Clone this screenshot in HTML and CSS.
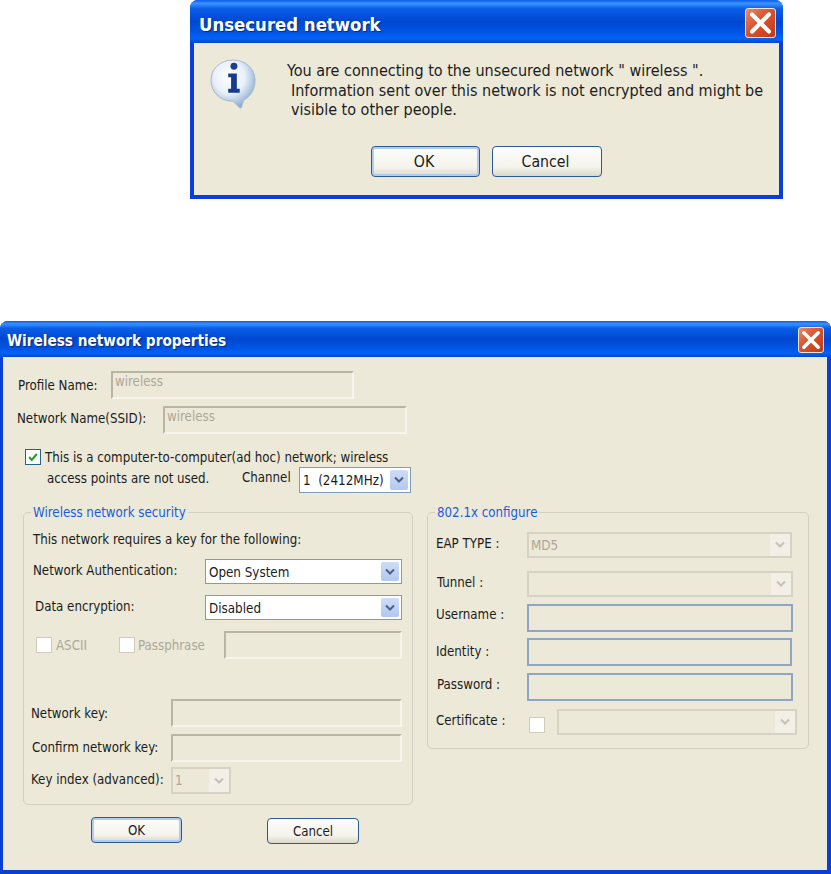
FILE: index.html
```html
<!DOCTYPE html>
<html lang="en">
<head>
  <title>Wireless network dialogs</title>
  <meta charset="UTF-8">
  <link rel="stylesheet" href="styles.css">
</head>
<body>
  <section class="window alert">
    <header class="titlebar">
      <h1>Unsecured network</h1>
      <button class="close" aria-label="Close">
        <svg viewBox="0 0 20 20"><path d="M4 4 L16 16 M16 4 L4 16" stroke="#fff" stroke-width="3" stroke-linecap="round"/></svg>
      </button>
    </header>
    <div class="client">
      <div class="message">
        <svg class="info" viewBox="0 0 48 52">
          <defs>
            <radialGradient id="bubble" cx="0.42" cy="0.35" r="0.7">
              <stop offset="0" stop-color="#ffffff"/>
              <stop offset="0.5" stop-color="#e9f0f9"/>
              <stop offset="1" stop-color="#7fa3cf"/>
            </radialGradient>
          </defs>
          <path d="M24 1 C37 1 47 10 47 22 C47 33 41 40 35 43 L33 50 C32.5 51.5 31 51.5 30 50 L24 44 C10 44 1 34 1 22 C1 10 11 1 24 1 Z" fill="url(#bubble)" stroke="#a9b8c8" stroke-width="1"/>
          <circle cx="25" cy="7.5" r="3.6" fill="#1a3f8f"/>
          <path d="M19 15 H28 V31 H31 V35 H19 V31 H22 V19 H19 Z" fill="#163a8c"/>
        </svg>
        <p class="message-text">
          You are connecting to the unsecured network " wireless ".
          <span class="indented">Information sent over this network is not encrypted and might be</span>
          <span class="indented">visible to other people.</span>
        </p>
      </div>
      <div class="alert-buttons">
        <button class="xp-btn default ok">OK</button>
        <button class="xp-btn cancel">Cancel</button>
      </div>
    </div>
  </section>

  <section class="window props">
    <header class="titlebar">
      <h1>Wireless network properties</h1>
      <button class="close" aria-label="Close">
        <svg viewBox="0 0 20 20"><path d="M4 4 L16 16 M16 4 L4 16" stroke="#fff" stroke-width="3" stroke-linecap="round"/></svg>
      </button>
    </header>
    <div class="client">
      <div class="row profile-row">
        <label class="lbl-profile">Profile Name:</label>
        <input class="sunken w243" disabled value="wireless">
      </div>
      <div class="row ssid-row">
        <label class="lbl-ssid lift2">Network Name(SSID):</label>
        <input class="sunken w244" disabled value="wireless">
      </div>
      <div class="adhoc-first">
        <span class="check checked">
          <svg viewBox="0 0 14 14"><path d="M2.5 7 L5.5 10.5 L11.5 3.5" fill="none" stroke="#21a121" stroke-width="2.4"/></svg>
        </span>
        <span class="adhoc-text">This is a computer-to-computer(ad hoc) network; wireless</span>
      </div>
      <div class="row adhoc-second">
        <span class="adhoc-cont">access points are not used.</span>
        <span class="channel-lbl">Channel</span>
        <div class="combo w112">
          <span class="combo-value channel-value">1  (2412MHz)</span>
          <span class="combo-btn"><svg viewBox="0 0 12 8"><path d="M2 1.5 L6 5.5 L10 1.5" fill="none" stroke="#4d6185" stroke-width="2"/></svg></span>
        </div>
      </div>

      <div class="groups">
        <div class="left-col">
          <fieldset class="group left-group">
            <legend>Wireless network security</legend>
            <p class="key-note">This network requires a key for the following:</p>
            <div class="row auth-row">
              <label class="lbl-auth lift1">Network Authentication:</label>
              <div class="combo w197">
                <span class="combo-value">Open System</span>
                <span class="combo-btn"><svg viewBox="0 0 12 8"><path d="M2 1.5 L6 5.5 L10 1.5" fill="none" stroke="#4d6185" stroke-width="2"/></svg></span>
              </div>
            </div>
            <div class="row data-row">
              <label class="lbl-data lift1">Data encryption:</label>
              <div class="combo w197">
                <span class="combo-value">Disabled</span>
                <span class="combo-btn"><svg viewBox="0 0 12 8"><path d="M2 1.5 L6 5.5 L10 1.5" fill="none" stroke="#4d6185" stroke-width="2"/></svg></span>
              </div>
            </div>
            <div class="row ascii-row">
              <span class="opt opt-ascii"><span class="check off"></span><span class="muted">ASCII</span></span>
              <span class="opt opt-pass"><span class="check off"></span><span class="muted">Passphrase</span></span>
              <input class="sunken w178" disabled>
            </div>
            <div class="row netkey-row">
              <label class="lbl-key">Network key:</label>
              <input class="sunken w231" disabled>
            </div>
            <div class="row confirm-row">
              <label class="lbl-confirm lift1">Confirm network key:</label>
              <input class="sunken w231" disabled>
            </div>
            <div class="row index-row">
              <label class="lbl-key lift1">Key index (advanced):</label>
              <div class="combo disabled w60">
                <span class="combo-value">1</span>
                <span class="combo-btn"><svg viewBox="0 0 12 8"><path d="M2 1.5 L6 5.5 L10 1.5" fill="none" stroke="#c4c2b6" stroke-width="2"/></svg></span>
              </div>
            </div>
          </fieldset>
          <div class="props-buttons">
            <button class="xp-btn default props-ok">OK</button>
            <button class="xp-btn props-cancel">Cancel</button>
          </div>
        </div>

        <fieldset class="group right-group">
          <legend>802.1x configure</legend>
          <div class="row eap-row">
            <label class="lbl-eap lift2">EAP TYPE :</label>
            <div class="combo disabled w265">
              <span class="combo-value">MD5</span>
              <span class="combo-btn"><svg viewBox="0 0 12 8"><path d="M2 1.5 L6 5.5 L10 1.5" fill="none" stroke="#c4c2b6" stroke-width="2"/></svg></span>
            </div>
          </div>
          <div class="row tunnel-row">
            <label class="lbl-tunnel lift2">Tunnel :</label>
            <div class="combo disabled w266">
              <span class="combo-value"></span>
              <span class="combo-btn"><svg viewBox="0 0 12 8"><path d="M2 1.5 L6 5.5 L10 1.5" fill="none" stroke="#c4c2b6" stroke-width="2"/></svg></span>
            </div>
          </div>
          <div class="row user-row">
            <label class="lbl-eap lift4">Username :</label>
            <input class="blue-input w266">
          </div>
          <div class="row identity-row">
            <label class="lbl-eap lift1">Identity :</label>
            <input class="blue-input w265">
          </div>
          <div class="row password-row">
            <label class="lbl-tunnel lift3">Password :</label>
            <input class="blue-input w266">
          </div>
          <div class="row cert-row">
            <label class="lbl-eap lift2">Certificate :</label>
            <span class="check off cert-check"></span>
            <div class="combo disabled w240">
              <span class="combo-value"></span>
              <span class="combo-btn"><svg viewBox="0 0 12 8"><path d="M2 1.5 L6 5.5 L10 1.5" fill="none" stroke="#c4c2b6" stroke-width="2"/></svg></span>
            </div>
          </div>
        </fieldset>
      </div>
    </div>
  </section>
</body>
</html>
```

FILE: styles.css
```css
:root {
  --face: #ece9d8;
  --frame: #0a3fd6;
  --ink: #1c1c1c;
  --muted: #aca899;
  --edge: #d2d0c0;
  --field: #7f9db9;
}

* {
  box-sizing: border-box;
}

html, body {
  margin: 0;
  height: 874px;
  overflow: hidden;
}

body {
  background: #fff;
  color: var(--ink);
  font-family: "DejaVu Sans Condensed", "DejaVu Sans", sans-serif;
  font-size: 13.2px;
}

label, p {
  margin: 0;
}

/* window frames */
.window {
  display: flex;
  flex-direction: column;
  background: var(--frame);
  border-radius: 8px 8px 0 0;
  overflow: hidden;
}

.alert {
  width: 593px;
  height: 199px;
  margin-left: 190px;
  padding: 0 4px 4px;
}

.props {
  width: 831px;
  height: 553px;
  margin-top: 122px;
  padding: 0 4px 4px 3px;
}

.titlebar {
  flex: none;
  display: flex;
  align-items: center;
  justify-content: space-between;
  margin: 0 -4px;
  color: #fff;
  background: linear-gradient(#0a5ce8 0, #3a93ff 8%, #0a5ee8 20%, #0047d0 50%, #0055e5 75%, #0063f8 90%, #0046c8 100%);
}

.alert .titlebar {
  height: 43px;
  padding: 0 7px 0 9px;
}

.props .titlebar {
  height: 36px;
  padding: 0 7px 0 8px;
}

.titlebar h1 {
  font-weight: bold;
  text-shadow: 1px 1px 1px #0a2a80;
  white-space: nowrap;
}

.alert h1 {
  margin: 6px 0 0;
  font-size: 18.4px;
}

.props h1 {
  margin: 3px 0 0;
  font-size: 15.2px;
}

.close {
  display: flex;
  padding: 0;
  border: 1px solid #f2e4dc;
  border-radius: 3px;
  background: linear-gradient(135deg, #e68a6c, #d9532c 45%, #c23a14);
}

.alert .close {
  width: 31px;
  height: 30px;
  margin-top: 2px;
}

.props .close {
  width: 26px;
  height: 26px;
  margin-top: 1px;
}

.close svg {
  width: 100%;
  height: 100%;
}

.client {
  flex: 1;
  background: var(--face);
}

/* top dialog */
.message {
  display: flex;
  height: 71px;
  margin-top: 16px;
  padding-left: 16px;
}

.info {
  width: 46px;
  height: 50px;
  flex: none;
}

.message-text {
  margin: 2px 0 0 31px;
  font-size: 16px;
  line-height: 19.5px;
  white-space: nowrap;
}

.indented {
  display: block;
  padding-left: 4px;
}

.alert-buttons {
  display: flex;
  gap: 12px;
  margin-top: 16px;
  padding-left: 177px;
}

.xp-btn {
  padding: 0;
  border: 1px solid #2c5b93;
  border-radius: 4px;
  color: var(--ink);
  font: inherit;
  background: linear-gradient(#fdfdfb, #f4f3ec 70%, #dcd8c8);
}

.xp-btn.default {
  box-shadow: inset 0 0 0 2px #b4cbf0;
}

.ok {
  width: 109px;
  height: 31px;
  padding-right: 3px;
  font-size: 15.7px;
}

.cancel {
  width: 110px;
  height: 31px;
  padding-right: 3px;
  font-size: 15.7px;
}

/* bottom dialog */
.row {
  display: flex;
  align-items: center;
  white-space: nowrap;
}

.row label {
  flex: none;
}

.lift1 { margin-bottom: 2px; }
.lift2 { margin-bottom: 4px; }
.lift3 { margin-bottom: 6px; }
.lift4 { margin-bottom: 8px; }

.profile-row {
  height: 28px;
  margin-top: 14px;
}

.ssid-row {
  height: 28px;
  margin-top: 7px;
}

.lbl-profile {
  width: 93px;
  margin-left: 15px;
}

.lbl-ssid {
  width: 146px;
  margin-left: 14px;
}

.sunken, .blue-input {
  display: block;
  height: 28px;
  margin: 0;
  outline: 0;
  border-radius: 0;
  font: inherit;
  background: var(--face);
}

.sunken {
  padding: 0 0 7px 2px;
  color: var(--muted);
  border: 2px solid;
  border-color: #b8b5a5 #f6f4ec #f6f4ec #b8b5a5;
}

.blue-input {
  padding: 0;
  border: 2px solid #8ea6c4;
}

.w60 { width: 60px; }
.w112 { width: 112px; }
.w178 { width: 178px; }
.w197 { width: 197px; }
.w231 { width: 231px; }
.w240 { width: 240px; }
.w243 { width: 243px; }
.w244 { width: 244px; }
.w265 { width: 265px; }
.w266 { width: 266px; }

.adhoc-first {
  display: flex;
  align-items: center;
  height: 16px;
  margin: 15px 0 0 22px;
}

.adhoc-text {
  margin-left: 4px;
}

.adhoc-second {
  height: 26px;
  margin-top: 2px;
}

.adhoc-cont {
  width: 195px;
  margin-left: 44px;
  margin-bottom: 4px;
}

.channel-lbl {
  width: 57px;
  margin-bottom: 6px;
}

.check {
  display: block;
  flex: none;
  width: 16px;
  height: 16px;
  background: #fff;
}

.check.checked {
  padding: 1px;
  border: 1px solid #2b5f86;
}

.check.checked svg {
  display: block;
}

.check.off {
  border: 1px solid #cfccbc;
}

.combo {
  display: flex;
  align-items: stretch;
  flex: none;
  padding: 2px;
  background: #fff;
  border: 1px solid var(--field);
}

.row .combo {
  height: 100%;
}

.combo-value {
  flex: 1;
  padding: 1px 0 0 1px;
  font-size: 13.3px;
  line-height: 20px;
  white-space: pre;
}

.channel-value {
  padding-left: 1px;
}

.combo-btn {
  flex: none;
  display: flex;
  align-items: center;
  justify-content: center;
  width: 18px;
  border-radius: 2px;
  background: linear-gradient(#cfdcf6, #b2c8f2);
}

.combo-btn svg {
  width: 12px;
  height: 8px;
}

.combo.disabled {
  background: var(--face);
  border: 2px solid #d6d3c4;
  padding: 0;
}

.combo.disabled .combo-value {
  color: var(--muted);
  padding: 2px 0 0 2px;
}

.combo.disabled .combo-btn {
  width: 20px;
  border-radius: 0;
  background: #f1efe6;
}

.groups {
  display: flex;
  align-items: flex-start;
  gap: 14px;
  margin: 9px 0 0 20px;
}

.left-col {
  width: 390px;
}

.group {
  margin: 0;
  padding: 0;
  border: 1px solid var(--edge);
  border-radius: 5px;
  min-width: 0;
}

.group legend {
  margin-left: 7px;
  padding: 2px 2px 0;
  color: #1a5be0;
  line-height: 18px;
}

.left-group {
  width: 390px;
  padding-bottom: 10px;
}

.right-group {
  width: 382px;
  padding-bottom: 13px;
}

.key-note {
  margin: 9px 0 0 9px;
  line-height: 18px;
}

.auth-row {
  height: 25px;
  margin-top: 10px;
}

.data-row {
  height: 25px;
  margin-top: 11px;
}

.lbl-auth {
  width: 172px;
  margin-left: 9px;
}

.lbl-data {
  width: 170px;
  margin-left: 11px;
}

.ascii-row {
  height: 28px;
  margin-top: 11px;
  padding-left: 12px;
}

.opt {
  display: flex;
  align-items: center;
  gap: 4px;
}

.opt-ascii {
  width: 83px;
}

.opt-pass {
  width: 105px;
  gap: 3px;
}

.muted {
  color: var(--muted);
}

.netkey-row {
  height: 28px;
  margin-top: 40px;
}

.confirm-row {
  height: 28px;
  margin-top: 7px;
}

.index-row {
  height: 27px;
  margin-top: 5px;
}

.lbl-key {
  width: 140px;
  margin-left: 7px;
}

.lbl-confirm {
  width: 139px;
  margin-left: 8px;
}

.props-buttons {
  display: flex;
  align-items: flex-start;
  gap: 85px;
  margin: 12px 0 0 68px;
}

.props-ok {
  width: 91px;
  height: 26px;
}

.props-cancel {
  width: 92px;
  height: 26px;
  margin-top: 1px;
}

.lbl-eap {
  width: 91px;
  margin-left: 8px;
}

.lbl-tunnel {
  width: 90px;
  margin-left: 9px;
}

.eap-row {
  height: 26px;
  margin-top: 10px;
}

.tunnel-row {
  height: 26px;
  margin-top: 13px;
}

.user-row {
  height: 28px;
  margin-top: 7px;
}

.identity-row {
  height: 28px;
  margin-top: 6px;
}

.password-row {
  height: 28px;
  margin-top: 7px;
}

.cert-row {
  height: 26px;
  margin-top: 8px;
}

.cert-check {
  margin: 5px 12px 0 2px;
}
```
